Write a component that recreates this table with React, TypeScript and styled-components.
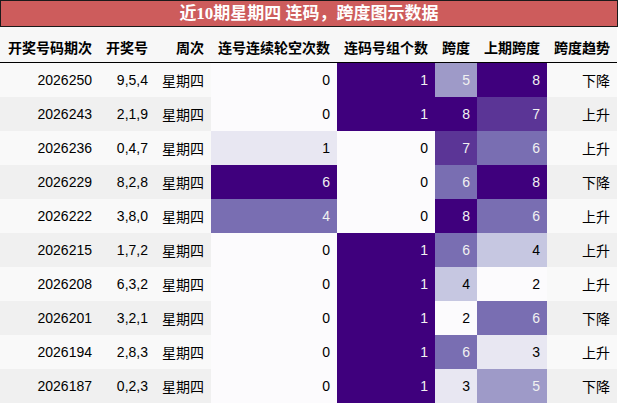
import React from "react";
import styled, { createGlobalStyle } from "styled-components";

const GlobalStyle = createGlobalStyle`
  html, body { margin: 0; padding: 0; background: #ffffff; }
  body { font-family: "Liberation Sans", "Noto Sans CJK SC", sans-serif; }
`;

const COLS = "99px 56px 56px 126px 98px 42px 70px 70px";

const Page = styled.div`
  width: 618px;
`;

const Title = styled.div`
  box-sizing: border-box;
  width: 618px;
  height: 27px;
  border: 1px solid #1a1a1a;
  background: #cd5c5c;
  color: #ffffff;
  font-family: "Liberation Serif", "Noto Sans CJK SC", serif;
  font-weight: bold;
  font-size: 17px;
  display: flex;
  align-items: center;
  justify-content: center;
  line-height: 1;
`;

const Grid = styled.div`
  width: 617px;
  display: grid;
  grid-template-columns: ${COLS};
`;

const HeadCell = styled.div`
  box-sizing: border-box;
  height: 36px;
  padding: 4px 7px 0 0;
  border-bottom: 1px solid #000000;
  background: #f7f7f7;
  color: #000000;
  font-size: 14px;
  font-weight: bold;
  display: flex;
  align-items: center;
  justify-content: flex-end;
  white-space: nowrap;
`;

const Cell = styled.div<{ $bg: string; $fg: string }>`
  box-sizing: border-box;
  height: 34px;
  padding: 0 7px 0 0;
  background: ${(p) => p.$bg};
  color: ${(p) => p.$fg};
  font-size: 14px;
  display: flex;
  align-items: center;
  justify-content: flex-end;
  white-space: nowrap;
`;

const PURPLES = [
  [252, 251, 253],
  [239, 237, 245],
  [218, 218, 235],
  [188, 189, 220],
  [158, 154, 200],
  [128, 125, 186],
  [106, 81, 163],
  [84, 39, 143],
  [63, 0, 125],
];

function purple(t: number): [number, number, number] {
  const x = Math.max(0, Math.min(1, t)) * 8;
  const i = Math.min(7, Math.floor(x));
  const f = x - i;
  const a = PURPLES[i];
  const b = PURPLES[i + 1];
  return [0, 1, 2].map((k) => Math.round(a[k] + (b[k] - a[k]) * f)) as [number, number, number];
}

function lum(c: [number, number, number]) {
  const [r, g, b] = c.map((v) => {
    const s = v / 255;
    return s <= 0.03928 ? s / 12.92 : Math.pow((s + 0.055) / 1.055, 2.4);
  });
  return 0.2126 * r + 0.7152 * g + 0.0722 * b;
}

function grad(v: number, min: number, max: number) {
  const c = purple((v - min) / (max - min));
  return {
    bg: `rgb(${c[0]}, ${c[1]}, ${c[2]})`,
    fg: lum(c) < 0.408 ? "#f1f1f1" : "#000000",
  };
}

type Row = {
  id: string;
  nums: string;
  week: string;
  gap: number;
  groups: number;
  span: number;
  prev: number;
  trend: string;
};

const rows: Row[] = [
  { id: "2026250", nums: "9,5,4", week: "星期四", gap: 0, groups: 1, span: 5, prev: 8, trend: "下降" },
  { id: "2026243", nums: "2,1,9", week: "星期四", gap: 0, groups: 1, span: 8, prev: 7, trend: "上升" },
  { id: "2026236", nums: "0,4,7", week: "星期四", gap: 1, groups: 0, span: 7, prev: 6, trend: "上升" },
  { id: "2026229", nums: "8,2,8", week: "星期四", gap: 6, groups: 0, span: 6, prev: 8, trend: "下降" },
  { id: "2026222", nums: "3,8,0", week: "星期四", gap: 4, groups: 0, span: 8, prev: 6, trend: "上升" },
  { id: "2026215", nums: "1,7,2", week: "星期四", gap: 0, groups: 1, span: 6, prev: 4, trend: "上升" },
  { id: "2026208", nums: "6,3,2", week: "星期四", gap: 0, groups: 1, span: 4, prev: 2, trend: "上升" },
  { id: "2026201", nums: "3,2,1", week: "星期四", gap: 0, groups: 1, span: 2, prev: 6, trend: "下降" },
  { id: "2026194", nums: "2,8,3", week: "星期四", gap: 0, groups: 1, span: 6, prev: 3, trend: "上升" },
  { id: "2026187", nums: "0,2,3", week: "星期四", gap: 0, groups: 1, span: 3, prev: 5, trend: "下降" },
];

const headers = ["开奖号码期次", "开奖号", "周次", "连号连续轮空次数", "连码号组个数", "跨度", "上期跨度", "跨度趋势"];

export default function App() {
  const gMin = Math.min(...rows.map((r) => r.gap));
  const gMax = Math.max(...rows.map((r) => r.gap));
  const cMin = Math.min(...rows.map((r) => r.groups));
  const cMax = Math.max(...rows.map((r) => r.groups));
  const sMin = Math.min(...rows.map((r) => r.span));
  const sMax = Math.max(...rows.map((r) => r.span));
  const pMin = Math.min(...rows.map((r) => r.prev));
  const pMax = Math.max(...rows.map((r) => r.prev));

  return (
    <Page>
      <GlobalStyle />
      <Title>近10期星期四 连码，跨度图示数据</Title>
      <Grid>
        {headers.map((h) => (
          <HeadCell key={h}>{h}</HeadCell>
        ))}
        {rows.map((r, i) => {
          const stripe = i % 2 === 0 ? "#f9f9f9" : "#f0f0f0";
          const g = grad(r.gap, gMin, gMax);
          const c = grad(r.groups, cMin, cMax);
          const s = grad(r.span, sMin, sMax);
          const p = grad(r.prev, pMin, pMax);
          return (
            <React.Fragment key={r.id}>
              <Cell $bg={stripe} $fg="#000">{r.id}</Cell>
              <Cell $bg={stripe} $fg="#000">{r.nums}</Cell>
              <Cell $bg={stripe} $fg="#000">{r.week}</Cell>
              <Cell $bg={g.bg} $fg={g.fg}>{r.gap}</Cell>
              <Cell $bg={c.bg} $fg={c.fg}>{r.groups}</Cell>
              <Cell $bg={s.bg} $fg={s.fg}>{r.span}</Cell>
              <Cell $bg={p.bg} $fg={p.fg}>{r.prev}</Cell>
              <Cell $bg={stripe} $fg="#000">{r.trend}</Cell>
            </React.Fragment>
          );
        })}
      </Grid>
    </Page>
  );
}
